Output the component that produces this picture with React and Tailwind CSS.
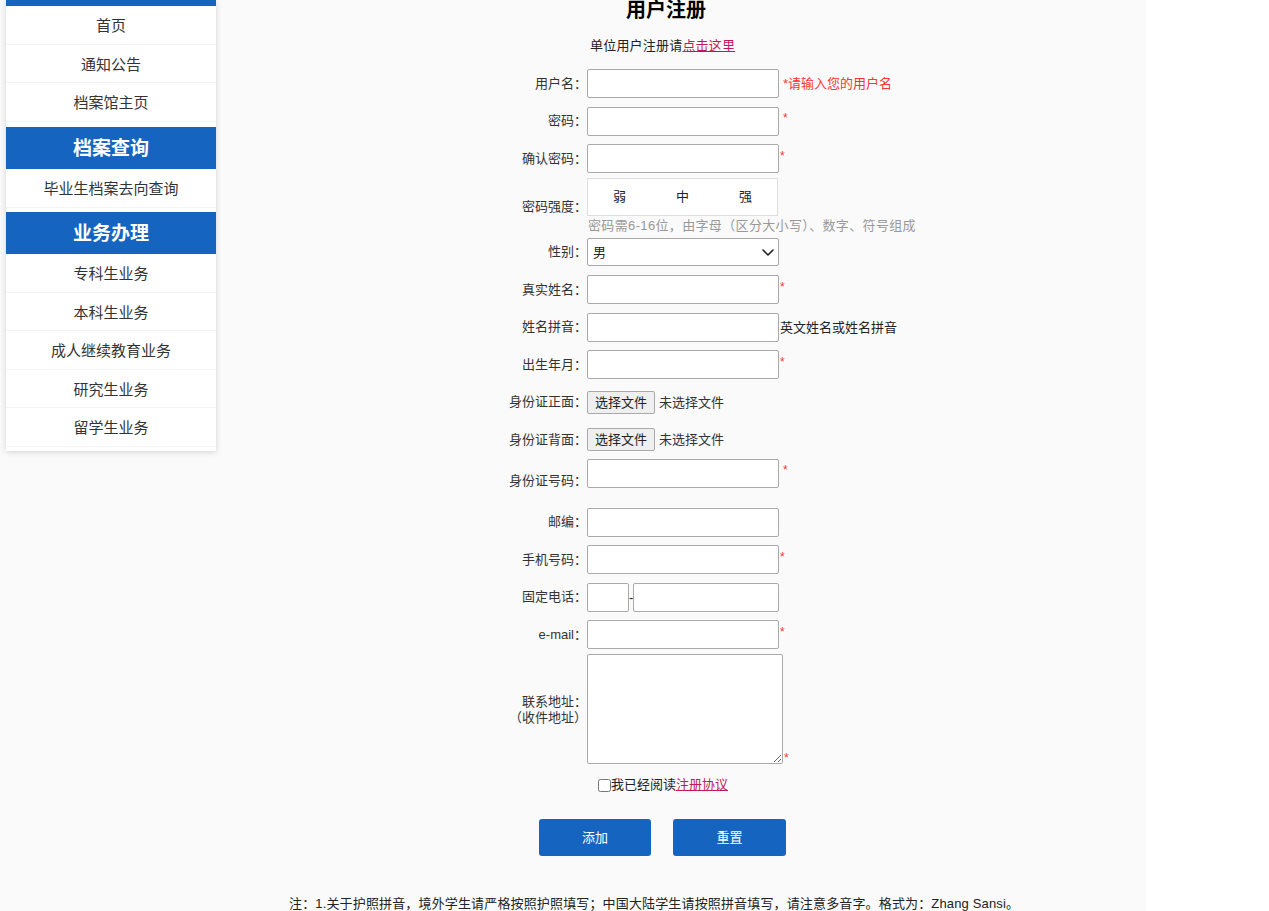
import React from "react";

const navTop = ["首页", "通知公告", "档案馆主页"];
const navBiz = ["专科生业务", "本科生业务", "成人继续教育业务", "研究生业务", "留学生业务"];

const NavItem = ({ text }) => (
  <div className="flex h-[38.5px] items-center justify-center border-b border-[#f4f4f4] pt-[3px] text-[15px] text-[#333]">
    {text}
  </div>
);

const NavHead = ({ text }) => (
  <div className="flex h-[42px] items-center justify-center bg-[#1565c0] pt-[3px] text-[19px] font-bold text-white">
    {text}
  </div>
);

const Star = ({ gap }) => (
  <span className={gap ? "ml-[4px] -mt-[6px] text-[12px] text-[#ff3333]" : "ml-[1px] -mt-[6px] text-[12px] text-[#ff3333]"}>
    *
  </span>
);

const TextInput = ({ w = "w-[192px]" }) => (
  <input
    type="text"
    className={`h-[29px] ${w} rounded-[2px] border border-[#a9a9a9] bg-white px-1 text-[13px] outline-none`}
  />
);

const Row = ({ label, height = "h-[37.5px]", align = "items-center", children }) => (
  <div className={`flex ${height} ${align}`}>
    <div className="flex h-full w-[150px] shrink-0 items-center justify-end text-right text-[13px] leading-[16px] text-[#333]">
      {label}
    </div>
    <div className="flex items-center">{children}</div>
  </div>
);

const FileInput = () => (
  <div className="flex items-center text-[13px] text-[#333]">
    <button className="h-[23px] w-[68px] rounded-[2px] border border-[#a9a9a9] bg-[#efefef] text-[13px] text-[#222]">
      选择文件
    </button>
    <span className="ml-[4px]">未选择文件</span>
  </div>
);

export default function App() {
  return (
    <div className="flex min-h-screen bg-white font-['Liberation_Sans','Noto_Sans_CJK_SC',sans-serif]">
      <div className="flex w-[1146px] shrink-0 items-start bg-[#fafafa]">
        {/* sidebar */}
        <aside className="ml-[6px] w-[210px] shrink-0 bg-white shadow-[0_1px_6px_rgba(0,0,0,0.16)]">
          <div className="h-[6px] bg-[#1565c0]" />
          <div className="pb-[5.5px]">
            {navTop.map((t) => (
              <NavItem key={t} text={t} />
            ))}
          </div>
          <NavHead text="档案查询" />
          <div className="pb-[4.5px]">
            <NavItem text="毕业生档案去向查询" />
          </div>
          <NavHead text="业务办理" />
          <div className="pb-[4.5px]">
            {navBiz.map((t) => (
              <NavItem key={t} text={t} />
            ))}
          </div>
        </aside>

        {/* main */}
        <main className="flex-1">
          <div className="ml-[215px] w-[470px]">
            <h2 className="h-[20px] text-center text-[20px] font-bold leading-[20px] text-black">用户注册</h2>
            <div className="mt-[16px] flex h-[20px] items-center">
              <div className="w-[150px]" />
              <p className="pl-[9px] text-[13px] tracking-[0.2px] text-[#222]">
                单位用户注册请
                <a href="#" className="text-[#c2185b] underline">点击这里</a>
              </p>
            </div>
          </div>

          <form className="ml-[221px] mt-[9px]">
            <Row label="用户名：">
              <TextInput />
              <span className="ml-[4px] text-[13px] text-[#ff3333]">*请输入您的用户名</span>
            </Row>
            <Row label="密码：">
              <TextInput />
              <Star gap />
            </Row>
            <Row label="确认密码：">
              <TextInput />
              <Star />
            </Row>
            <div className="flex h-[56px]">
              <div className="flex h-full w-[150px] shrink-0 items-center justify-end pt-[2px] text-[13px] text-[#333]">
                密码强度：
              </div>
              <div>
                <div className="grid h-[38px] w-[191px] grid-cols-3 border border-[#dedede] bg-white text-[13px] text-[#222]">
                  <span className="flex items-center justify-center">弱</span>
                  <span className="flex items-center justify-center">中</span>
                  <span className="flex items-center justify-center">强</span>
                </div>
                <p className="mt-[1px] whitespace-nowrap pl-[1px] text-[13px] leading-[17px] tracking-[0.35px] text-[#999]">
                  密码需6-16位，由字母（区分大小写）、数字、符号组成
                </p>
              </div>
            </div>
            <Row label="性别：">
              <div className="relative">
                <select className="h-[28px] w-[192px] appearance-none rounded-[2px] border border-[#a9a9a9] bg-white px-[5px] text-[13px] text-[#222] outline-none">
                  <option>男</option>
                  <option>女</option>
                </select>
                <svg
                  className="pointer-events-none absolute right-[5px] top-[9px]"
                  width="12"
                  height="10"
                  viewBox="0 0 12 10"
                  fill="none"
                >
                  <path d="M1 3l5 5 5-5" stroke="#222" strokeWidth="1.6" strokeLinecap="round" strokeLinejoin="round" />
                </svg>
              </div>
            </Row>
            <Row label="真实姓名：">
              <TextInput />
              <Star />
            </Row>
            <Row label="姓名拼音：">
              <TextInput />
              <span className="ml-[1px] text-[13px] text-[#222]">英文姓名或姓名拼音</span>
            </Row>
            <Row label="出生年月：">
              <TextInput />
              <Star />
            </Row>
            <Row label="身份证正面：">
              <FileInput />
            </Row>
            <Row label="身份证背面：">
              <FileInput />
            </Row>
            <Row label="身份证号码：" height="h-[45px]" align="items-start">
              <div className="flex items-center">
                <TextInput />
                <Star gap />
              </div>
            </Row>
            <Row label="邮编：">
              <TextInput />
            </Row>
            <Row label="手机号码：">
              <TextInput />
              <Star />
            </Row>
            <Row label="固定电话：">
              <TextInput w="w-[42px]" />
              <span className="w-[4px] text-[13px] text-[#222]">-</span>
              <TextInput w="w-[146px]" />
            </Row>
            <Row label="e-mail：">
              <TextInput />
              <Star />
            </Row>
            <div className="flex h-[113px]">
              <div className="flex h-full w-[150px] shrink-0 items-center justify-end text-right text-[13px] leading-[16px] text-[#333]">
                <span>
                  联系地址：
                  <br />
                  （收件地址）
                </span>
              </div>
              <div className="flex h-[110px] items-end self-start">
                <textarea className="h-[110px] w-[196px] resize rounded-[2px] border border-[#a9a9a9] bg-white text-[13px]" />
                <span className="-mb-[3px] ml-[1px] text-[12px] text-[#ff3333]">*</span>
              </div>
            </div>
            <div className="flex h-[37px] items-center">
              <div className="w-[161px] shrink-0" />
              <label className="flex items-center text-[13px] text-[#222]">
                <input type="checkbox" className="h-[13px] w-[13px]" />
                <span>
                  我已经阅读<a href="#" className="text-[#c2185b] underline">注册协议</a>
                </span>
              </label>
            </div>
            <div className="mt-[15.5px] flex gap-[22px] pl-[102px]">
              <button type="button" className="h-[37px] w-[112px] rounded-[3px] bg-[#1565c0] text-[13px] text-white">
                添加
              </button>
              <button type="button" className="h-[37px] w-[113px] rounded-[3px] bg-[#1565c0] text-[13px] text-white">
                重置
              </button>
            </div>
          </form>

          <p className="ml-[73px] mt-[39px] whitespace-nowrap text-[13px] leading-[18px] tracking-[0.15px] text-[#222]">
            注：1.关于护照拼音，境外学生请严格按照护照填写；中国大陆学生请按照拼音填写，请注意多音字。格式为：Zhang Sansi。
          </p>
        </main>
      </div>
    </div>
  );
}
